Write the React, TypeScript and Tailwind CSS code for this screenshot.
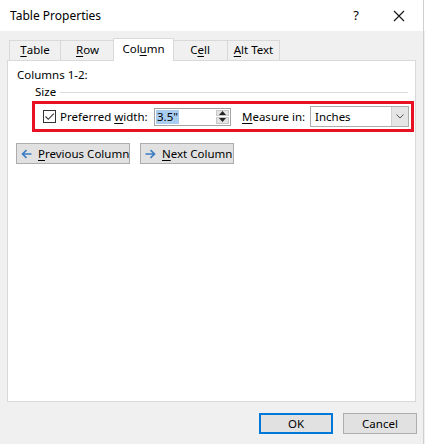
import React from 'react';

const U: React.FC<{ children: React.ReactNode }> = ({ children }) => (
  <span className="underline underline-offset-2 decoration-1">{children}</span>
);

const ArrowIcon: React.FC<{ dir: 'left' | 'right' }> = ({ dir }) => (
  <svg width="11" height="10" viewBox="0 0 11 10" className="shrink-0">
    {dir === 'left' ? (
      <path d="M10.5 5H2M5.5 1.2L1.5 5l4 3.8" stroke="#3b7dc4" strokeWidth="1.6" fill="none" />
    ) : (
      <path d="M0.5 5H9M5.5 1.2L9.5 5l-4 3.8" stroke="#3b7dc4" strokeWidth="1.6" fill="none" />
    )}
  </svg>
);

const App: React.FC = () => {
  const tabs = [
    { key: 'table', label: <><U>T</U>able</>, w: 'w-[51px]' },
    { key: 'row', label: <><U>R</U>ow</>, w: 'w-[55px]' },
    { key: 'column', label: <>Col<U>u</U>mn</>, w: 'w-[61px]' },
    { key: 'cell', label: <>C<U>e</U>ll</>, w: 'w-[55px]' },
    { key: 'alt', label: <><U>A</U>lt Text</>, w: 'w-[53px]' },
  ];

  return (
    <div className="relative w-[425px] h-[444px] overflow-hidden bg-[#f0f0f0] text-[11.5px] text-[#000] whitespace-nowrap font-['Noto_Sans','Open_Sans',sans-serif]">
      {/* title bar */}
      <div className="h-[31px] bg-white flex items-center pl-[10px] pr-[2px]">
        <span className="flex-1 text-[12px]">Table Properties</span>
        <span className="w-[14px] text-center mr-[30px] text-[13px]">?</span>
        <svg width="12" height="12" viewBox="0 0 12 12" className="mr-[18px]">
          <path d="M1 1l10 10M11 1L1 11" stroke="#111" strokeWidth="1.1" />
        </svg>
      </div>

      {/* tabs */}
      <div className="flex items-end h-[29px] pl-[9px]">
        {tabs.map((t, i) =>
          t.key === 'column' ? (
            <div
              key={t.key}
              className="relative z-10 -mx-[2px] mb-[-1px] h-[23px] w-[61px] bg-white border border-b-0 border-[#d9d9d9] flex items-center justify-center pb-[2px]"
            >
              {t.label}
            </div>
          ) : (
            <div
              key={t.key}
              className={`${t.w} h-[20px] border-t border-l ${i === tabs.length - 1 || tabs[i + 1].key === 'column' ? 'border-r' : ''} border-[#d9d9d9] flex items-center justify-center pb-[1px]`}
            >
              {t.label}
            </div>
          )
        )}
      </div>

      {/* panel */}
      <div className="ml-[7px] w-[409px] h-[342px] bg-white border border-[#d9d9d9] pt-[6px]">
        <div className="pl-[9px] leading-[16px]">Columns 1-2:</div>
        <div className="flex items-center pl-[27px] mt-[1px] h-[16px]">
          <span>Size</span>
          <div className="flex-1 h-px bg-[#dcdcdc] ml-[4px] mr-[7px]" />
        </div>
        <div className="ml-[24px] mt-[1px] w-[382px] h-[31px] border-[3px] border-[#e81123] flex items-center">
          <div className="ml-[8px] w-[13px] h-[13px] border border-[#333] flex items-center justify-center shrink-0">
            <svg width="11" height="11" viewBox="0 0 11 11">
              <path d="M1.5 5.5l2.8 2.8L9.8 2.6" stroke="#333" strokeWidth="1.1" fill="none" />
            </svg>
          </div>
          <span className="ml-[4px] w-[94px] shrink-0">
            Preferred <U>w</U>idth:
          </span>
          <div className="w-[77px] h-[18px] border border-[#a3a3a3] flex items-stretch shrink-0">
            <div className="flex-1 flex items-center pl-[1px]">
              <span className="bg-[#a9cdf0] leading-[14px] px-[1px]">3.5"</span>
            </div>
            <div className="w-[15px] flex flex-col gap-[1px] p-[1px]">
              <div className="flex-1 bg-[#e3e3e3] border border-[#c7c7c7] flex items-center justify-center">
                <svg width="7" height="4" viewBox="0 0 7 4"><path d="M3.5 0L7 4H0z" fill="#222" /></svg>
              </div>
              <div className="flex-1 bg-[#e3e3e3] border border-[#c7c7c7] flex items-center justify-center">
                <svg width="7" height="4" viewBox="0 0 7 4"><path d="M0 0h7L3.5 4z" fill="#222" /></svg>
              </div>
            </div>
          </div>
          <span className="ml-[11px] w-[68px] shrink-0">
            <U>M</U>easure in:
          </span>
          <div className="w-[99px] h-[21px] border border-[#acacac] flex items-stretch shrink-0">
            <div className="flex-1 flex items-center pl-[4px]">Inches</div>
            <div className="w-[17px] bg-[#e5e5e5] border-l border-[#d0d0d0] flex items-center justify-center">
              <svg width="8" height="5" viewBox="0 0 8 5">
                <path d="M0.5 0.5L4 4l3.5-3.5" stroke="#555" strokeWidth="1" fill="none" />
              </svg>
            </div>
          </div>
        </div>
        <div className="flex ml-[8px] mt-[11px] gap-[10px]">
          <div className="w-[114px] h-[21px] bg-[#e1e1e1] border border-[#adadad] flex items-center pl-[4px] gap-[6px]">
            <ArrowIcon dir="left" />
            <span>
              <U>P</U>revious Column
            </span>
          </div>
          <div className="w-[94px] h-[21px] bg-[#e1e1e1] border border-[#adadad] flex items-center pl-[4px] gap-[6px]">
            <ArrowIcon dir="right" />
            <span>
              <U>N</U>ext Column
            </span>
          </div>
        </div>
      </div>

      {/* bottom buttons */}
      <div className="flex justify-end gap-[10px] pr-[8px] mt-[11px]">
        <div className="w-[74px] h-[21px] bg-[#e1e1e1] border-2 border-[#0078d7] flex items-center justify-center">OK</div>
        <div className="w-[74px] h-[21px] bg-[#e1e1e1] border border-[#adadad] flex items-center justify-center">Cancel</div>
      </div>

      {/* window edge */}
      <div className="absolute top-0 right-[1px] w-px h-full bg-[#cfcfcf]" />
    </div>
  );
};

export default App;
